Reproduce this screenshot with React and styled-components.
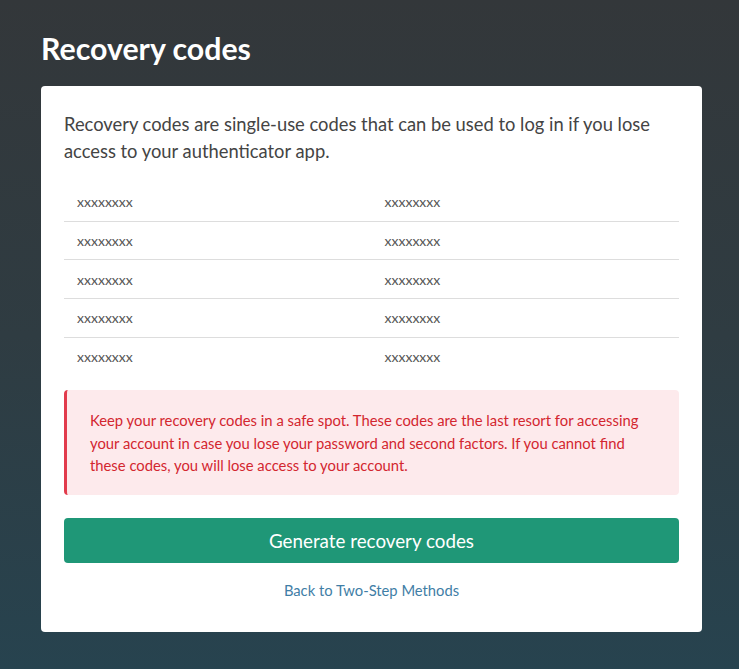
import React from 'react';
import styled, { createGlobalStyle } from 'styled-components';

const GlobalStyle = createGlobalStyle`
  html, body {
    margin: 0;
    padding: 0;
  }
  body {
    font-family: Lato, "Open Sans", sans-serif;
    background: linear-gradient(180deg, #33373a 0%, #2f3c42 50%, #27434f 100%);
    min-height: 669px;
  }
`;

const codes = [
  ['xxxxxxxx', 'xxxxxxxx'],
  ['xxxxxxxx', 'xxxxxxxx'],
  ['xxxxxxxx', 'xxxxxxxx'],
  ['xxxxxxxx', 'xxxxxxxx'],
  ['xxxxxxxx', 'xxxxxxxx'],
];

function App() {
  return (
    <>
      <GlobalStyle />
      <Page>
        <Title>Recovery codes</Title>
        <Card>
          <Intro>
            Recovery codes are single-use codes that can be used to log in if you lose
            access to your authenticator app.
          </Intro>
          <CodeTable>
            <tbody>
              {codes.map((row, i) => (
                <CodeRow key={i} last={i === codes.length - 1}>
                  {row.map((c, j) => (
                    <CodeCell key={j}>{c}</CodeCell>
                  ))}
                </CodeRow>
              ))}
            </tbody>
          </CodeTable>
          <Alert>
            Keep your recovery codes in a safe spot. These codes are the last resort for accessing
            your account in case you lose your password and second factors. If you cannot find
            these codes, you will lose access to your account.
          </Alert>
          <GenerateButton>Generate recovery codes</GenerateButton>
          <BackLink href="#">Back to Two-Step Methods</BackLink>
        </Card>
      </Page>
    </>
  );
}

export default App;

const Page = styled.div`
  width: 665px;
  margin: 0 auto;
  padding: 28px 0 37px 4px;
  box-sizing: border-box;
`;

const Title = styled.h1`
  margin: 0 0 18px 0;
  color: #fff;
  font-size: 30.3px;
  font-weight: 700;
  line-height: 40px;
`;

const Card = styled.div`
  background: #fff;
  border-radius: 4px;
  padding: 25px 23px 32px;
  display: flex;
  flex-direction: column;
`;

const Intro = styled.p`
  margin: 0 0 18px 0;
  color: #444;
  font-size: 18.35px;
  line-height: 27px;
`;

const CodeTable = styled.table`
  width: 100%;
  border-collapse: collapse;
  table-layout: fixed;
  margin-bottom: 15px;
`;

const CodeRow = styled.tr`
  border-bottom: ${({ last }) => (last ? 'none' : '1px solid #ddd')};
`;

const CodeCell = styled.td`
  padding: 0 13px;
  height: 37.7px;
  color: #555;
  font-size: 14px;
  vertical-align: middle;
`;

const Alert = styled.div`
  background: #fdeaec;
  border-left: 3px solid #e23b4c;
  border-radius: 4px;
  padding: 19px 23px 18px;
  color: #d3262f;
  font-size: 14.8px;
  line-height: 22.5px;
  margin-bottom: 23px;
`;

const GenerateButton = styled.button`
  height: 45px;
  border: none;
  border-radius: 4px;
  background: #1f9777;
  color: #fff;
  font-family: Lato, "Open Sans", sans-serif;
  font-size: 18.8px;
  cursor: pointer;
`;

const BackLink = styled.a`
  align-self: center;
  margin-top: 17px;
  color: #3f7ea6;
  font-size: 14.75px;
  line-height: 20px;
  text-decoration: none;
`;
